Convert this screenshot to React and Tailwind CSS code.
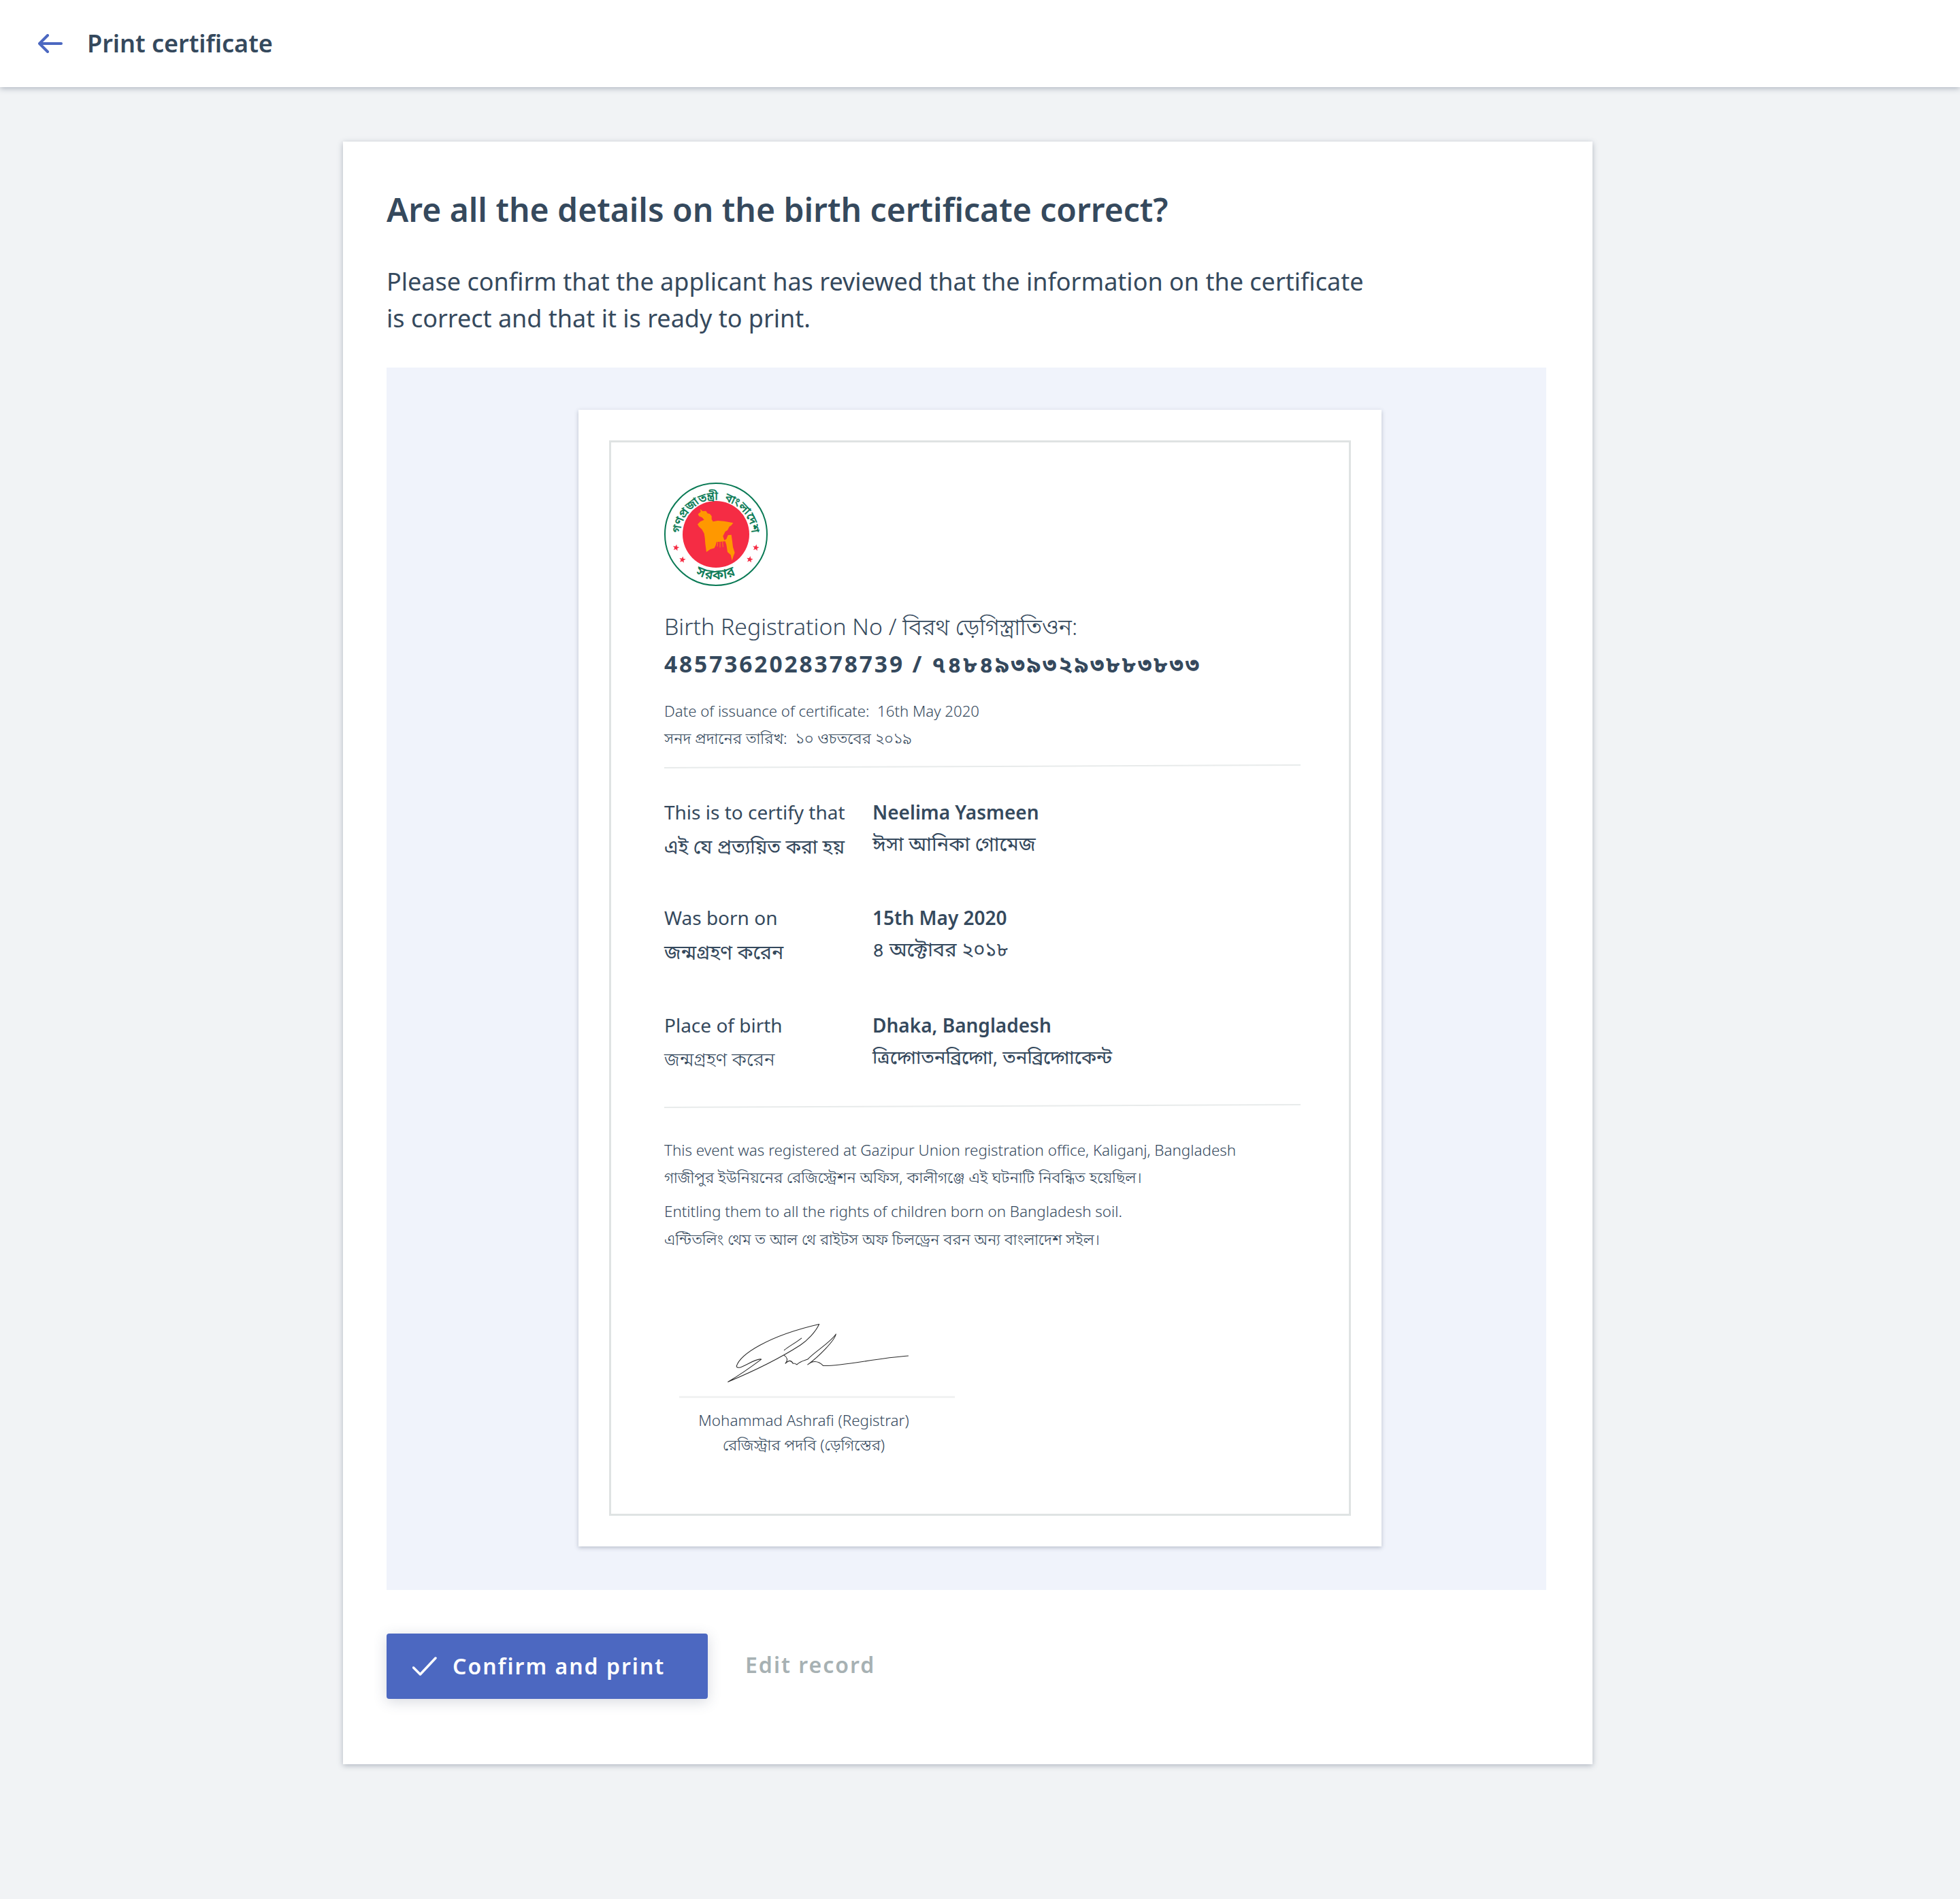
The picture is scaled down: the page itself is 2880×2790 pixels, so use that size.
import React from "react";

function star(cx, cy, r) {
  const pts = [];
  for (let i = 0; i < 10; i++) {
    const rad = i % 2 === 0 ? r : r * 0.42;
    const a = (-90 + i * 36 + 10) * (Math.PI / 180);
    pts.push(`${(cx + rad * Math.cos(a)).toFixed(2)},${(cy + rad * Math.sin(a)).toFixed(2)}`);
  }
  return pts.join(" ");
}

function Seal() {
  return (
    <svg width="152" height="154" viewBox="0 0 152 154" className="block">
      <defs>
        <path id="sealTop" d="M 23.5 79 A 52.5 52.5 0 1 1 128.5 79" />
        <path id="sealBottom" d="M 17.4 107 A 65.5 65.5 0 0 0 134.6 107" />
      </defs>
      <circle cx="76" cy="77" r="75" fill="#fff" stroke="#0a7a55" strokeWidth="2" />
      <circle cx="76" cy="77" r="49" fill="#f52c44" />
      <g transform="translate(-36.33,-27.67) scale(.3333)">
        <path
          fill="#ff9800"
          d="M268 203L278 212L293 211L300 222L310 224L318 234L318 248L324 258L345 254L372 256L390 259L413 264L405 274L396 280L388 296L378 302L368 322L374 340L383 335L390 318L405 316L409 345L412 370L420 395L414 410L408 430L402 405L388 392L383 360L378 345L360 346L340 348L336 362L330 375L312 380L295 392L290 355L288 330L285 310L275 292L262 280L256 270L268 258L285 250L276 240L262 234L258 225L270 215Z"
        />
        <path fill="none" stroke="#ff9800" strokeWidth="2.5" d="M345 348L343 368M355 346L355 372M366 346L368 370" />
        <polygon fill="#f52c44" points={star(161, 373, 15)} />
        <polygon fill="#f52c44" points={star(189, 426, 15)} />
        <polygon fill="#f52c44" points={star(513, 373, 15)} />
        <polygon fill="#f52c44" points={star(486, 425, 15)} />
      </g>
      <text fill="#0a7a55" fontSize="17" fontWeight="500" stroke="#0a7a55" strokeWidth="0.3">
        <textPath href="#sealTop" startOffset="50%" textAnchor="middle">গণপ্রজাতন্ত্রী{"\u00a0\u00a0"}বাংলাদেশ</textPath>
      </text>
      <text fill="#0a7a55" fontSize="20" fontWeight="500" stroke="#0a7a55" strokeWidth="0.3" letterSpacing="1">
        <textPath href="#sealBottom" startOffset="50%" textAnchor="middle">সরকার</textPath>
      </text>
    </svg>
  );
}

function Signature() {
  return (
    <svg width="270" height="90" viewBox="320 75 800 260" className="block" fill="none" stroke="#2b2b2b" strokeWidth="3.2" strokeLinecap="round" strokeLinejoin="round">
      <path d="M362 262C378 210 500 130 722 79C705 115 670 150 640 170C570 215 480 265 325 330C385 295 430 262 470 232C450 225 400 262 375 268C368 268 362 266 362 262" />
      <path d="M645 140C620 160 590 175 570 192M570 215C582 222 588 235 575 250C590 235 600 235 608 250C615 248 620 252 625 255C640 240 655 238 672 232C700 200 770 160 795 122C790 150 720 220 672 255C690 240 715 235 740 260C830 262 960 228 1110 217" />
    </svg>
  );
}

function Row({ en, bn, valEn, valBn, bnClass, valBnClass, className }) {
  return (
    <div className={`flex ${className}`}>
      <div className="w-[306px] shrink-0">
        <div className="h-[50px] text-[28px] leading-[50px] font-normal">{en}</div>
        <div className={`h-[50px] leading-[50px] ${bnClass}`}>{bn}</div>
      </div>
      <div>
        <div className="h-[46px] text-[28px] leading-[50px] font-semibold">{valEn}</div>
        <div className={`h-[50px] leading-[50px] font-normal ${valBnClass}`}>{valBn}</div>
      </div>
    </div>
  );
}

export default function App() {
  return (
    <div className="min-h-[2790px] bg-[#f1f3f5] text-[#35495d] font-['Noto_Sans','Noto_Sans_Bengali',sans-serif]">
      <header className="flex h-[128px] items-center bg-white pl-[56px] shadow-[0_2px_8px_rgba(53,67,93,0.35)]">
        <svg width="36" height="28" viewBox="0 0 36 28" fill="none" stroke="#4c68c1" strokeWidth="4" strokeLinecap="round" strokeLinejoin="round">
          <path d="M2 14H34M14 2L2 14L14 26" />
        </svg>
        <h1 className="ml-[36px] text-[36px] leading-[48px] font-semibold">Print certificate</h1>
      </header>
      <main className="ml-[504px] mt-[80px] h-[2384px] w-[1836px] bg-white pl-[64px] pr-[68px] pt-[68px] shadow-[0_2px_8px_rgba(53,67,93,0.35)]">
        <h2 className="text-[48px] leading-[64px] font-semibold">Are all the details on the birth certificate correct?</h2>
        <p className="mt-[47px] w-[1460px] text-[36px] leading-[54px]">
          Please confirm that the applicant has reviewed that the information on the certificate is correct and that it is ready to print.
        </p>
        <div className="mt-[45px] flex h-[1796px] justify-center bg-[#f0f3fb] pl-[40px] pt-[62px]">
          <div className="h-[1670px] w-[1180px] bg-white p-[45px] shadow-[0_2px_6px_rgba(53,67,93,0.3)]">
            <div className="h-[1580px] border-[3px] border-[#dfe3e3] pl-[78px] pr-[71px] pt-[58px]">
              <Seal />
              <div className="mt-[33px] text-[33.8px] leading-[50px] font-light">Birth Registration No / বিরথ ড়েগিস্ত্রাতিওন:</div>
              <div className="mt-[5px] text-[33.5px] leading-[50px] font-bold tracking-[2.9px]">4857362028378739 / ৭৪৮৪৯৩৯৩২৯৩৮৮৩৮৩৩</div>
              <div className="mt-[25px] text-[22.2px] leading-[40px] font-light">Date of issuance of certificate:&nbsp; 16th May 2020</div>
              <div className="text-[22.8px] leading-[40px] font-light">সনদ প্রদানের তারিখ:&nbsp; ১০ ওচতবের ২০১৯</div>
              <div className="mt-[20px] h-[2px] -rotate-[0.25deg] bg-[#e8ebeb]" />
              <Row className="mt-[41px]" bnClass="text-[28px] font-normal" valBnClass="text-[29px]" en="This is to certify that" bn="এই যে প্রত্যয়িত করা হয়" valEn="Neelima Yasmeen" valBn="ঈসা আনিকা গোমেজ" />
              <Row className="mt-[55px]" bnClass="text-[28.6px] font-normal" valBnClass="text-[29px]" en="Was born on" bn="জন্মগ্রহণ করেন" valEn="15th May 2020" valBn="৪ অক্টোবর ২০১৮" />
              <Row className="mt-[58px]" bnClass="text-[27.4px] font-light" valBnClass="text-[27.7px]" en="Place of birth" bn="জন্মগ্রহণ করেন" valEn="Dhaka, Bangladesh" valBn="ত্রিদ্গোতনব্রিদ্গো, তনব্রিদ্গোকেন্ট" />
              <div className="mt-[43px] h-[2px] -rotate-[0.25deg] bg-[#e8ebeb]" />
              <div className="mt-[44px] text-[22.4px] leading-[40px] font-light">This event was registered at Gazipur Union registration office, Kaliganj, Bangladesh</div>
              <div className="text-[22.8px] leading-[40px] font-light">গাজীপুর ইউনিয়নের রেজিস্ট্রেশন অফিস, কালীগঞ্জে এই ঘটনাটি নিবন্ধিত হয়েছিল।</div>
              <div className="mt-[10px] text-[22.4px] leading-[40px] font-light">Entitling them to all the rights of children born on Bangladesh soil.</div>
              <div className="text-[22.6px] leading-[42px] font-light">এন্টিতলিং থেম ত আল থে রাইটস অফ চিলড্রেন বরন অন্য বাংলাদেশ সইল।</div>
              <div className="ml-[22px] mt-[101px] w-[405px]">
                <div className="ml-[70px]"><Signature /></div>
                <div className="mt-[18px] h-[3px] bg-[#f1f2f2]" />
                <div className="mt-[15px] w-[366px] text-center text-[22.4px] leading-[36px] font-light">Mohammad Ashrafi (Registrar)</div>
                <div className="w-[366px] text-center text-[22.8px] leading-[36px] font-light">রেজিস্ট্রার পদবি (ড়েগিস্তের)</div>
              </div>
            </div>
          </div>
        </div>
        <div className="mt-[64px] flex items-center">
          <button className="flex h-[96px] w-[472px] items-center rounded-[4px] bg-[#4c68c1] pl-[38px] text-white shadow-[0_4px_20px_rgba(53,67,93,0.2)]">
            <svg width="36" height="28" viewBox="0 0 36 28" fill="none" stroke="#fff" strokeWidth="3.5" strokeLinecap="round" strokeLinejoin="round">
              <path d="M1.5 16L11.5 26L34 2" />
            </svg>
            <span className="ml-[23px] text-[32px] leading-[44px] font-semibold tracking-[2px]">Confirm and print</span>
          </button>
          <button className="ml-[55px] -mt-[4px] text-[32px] leading-[44px] font-semibold tracking-[2px] text-[#a7b1b3]">Edit record</button>
        </div>
      </main>
    </div>
  );
}
